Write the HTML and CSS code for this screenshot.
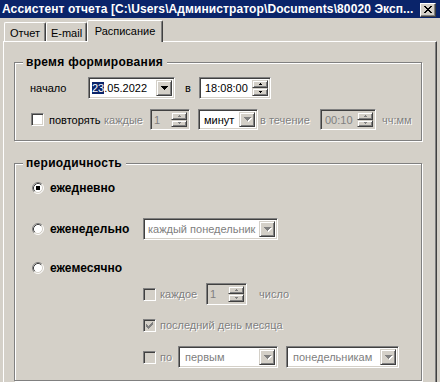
FILE: index.html
```html
<!DOCTYPE html>
<html lang="ru">
<head>
<meta charset="utf-8">
<title>Ассистент отчета</title>
<link rel="stylesheet" href="styles.css">
</head>
<body>
<div class="window">
  <div class="titlebar">
    <span class="title">Ассистент отчета [C:\Users\Администратор\Documents\80020 Эксп...</span>
    <span class="close">
      <svg width="8" height="7" viewBox="0 0 8 7" shape-rendering="crispEdges"><path d="M0 0h2v1h-2zM6 0h2v1h-2zM1 1h2v1h-2zM5 1h2v1h-2zM2 2h4v1h-4zM3 3h2v1h-2zM2 4h4v1h-4zM1 5h2v1h-2zM5 5h2v1h-2zM0 6h2v1h-2zM6 6h2v1h-2z"/></svg>
    </span>
  </div>

  <div class="tabs">
    <div class="tab t1">Отчет</div>
    <div class="tab t2">E-mail</div>
    <div class="tab t3 active">Расписание</div>
  </div>

  <div class="panel">
    <div class="group g1">
      <div class="legend">время формирования</div>

      <div class="row r1">
        <span class="lbl w-nachalo">начало</span>
        <div class="field combo w-date">
          <span class="val"><span class="sel">23</span>.05.2022</span>
          <span class="ddbtn"><svg class="arr" width="7" height="4" viewBox="0 0 7 4" shape-rendering="crispEdges"><path d="M0 0h7v1h-1v1h-1v1h-1v1h-1v-1h-1v-1h-1v-1h-1z"/></svg></span>
        </div>
        <span class="lbl w-v">в</span>
        <div class="field spin w-time">
          <span class="val">18:08:00</span>
          <span class="spinbtns">
            <span class="sb"><svg width="3" height="2" viewBox="0 0 3 2" shape-rendering="crispEdges"><path d="M1 0h1v1h1v1h-3v-1h1z"/></svg></span>
            <span class="sb"><svg width="3" height="2" viewBox="0 0 3 2" shape-rendering="crispEdges"><path d="M0 0h3v1h-1v1h-1v-1h-1z"/></svg></span>
          </span>
        </div>
      </div>

      <div class="row r2">
        <span class="check"></span>
        <span class="lbl w-povt">повторять</span>
        <span class="lbl dis w-kazhd">каждые</span>
        <div class="field spin disabled w-n1">
          <span class="val">1</span>
          <span class="spinbtns">
            <span class="sb dis"><svg width="3" height="2" viewBox="0 0 3 2" shape-rendering="crispEdges"><path d="M1 0h1v1h1v1h-3v-1h1z"/></svg></span>
            <span class="sb dis"><svg width="3" height="2" viewBox="0 0 3 2" shape-rendering="crispEdges"><path d="M0 0h3v1h-1v1h-1v-1h-1z"/></svg></span>
          </span>
        </div>
        <div class="field combo w-min">
          <span class="val">минут</span>
          <span class="ddbtn dis"><svg class="arr" width="8" height="5" viewBox="0 0 8 5" shape-rendering="crispEdges"><path fill="#fff" d="M1 1h7v1h-1v1h-1v1h-1v1h-1v-1h-1v-1h-1v-1h-1z"/><path fill="#808080" d="M0 0h7v1h-1v1h-1v1h-1v1h-1v-1h-1v-1h-1v-1h-1z"/></svg></span>
        </div>
        <span class="lbl dis w-vtech">в течение</span>
        <div class="field spin disabled w-t10">
          <span class="val">00:10</span>
          <span class="spinbtns">
            <span class="sb dis"><svg width="3" height="2" viewBox="0 0 3 2" shape-rendering="crispEdges"><path d="M1 0h1v1h1v1h-3v-1h1z"/></svg></span>
            <span class="sb dis"><svg width="3" height="2" viewBox="0 0 3 2" shape-rendering="crispEdges"><path d="M0 0h3v1h-1v1h-1v-1h-1z"/></svg></span>
          </span>
        </div>
        <span class="lbl dis w-hhmm">чч:мм</span>
      </div>
    </div>

    <div class="group g2">
      <div class="legend">периодичность</div>

      <div class="row p1">
        <span class="radio on"><svg width="12" height="12" viewBox="0 0 12 12"><circle cx="6" cy="6" r="5" fill="#fff"/><path d="M2.11 9.89A5.5 5.5 0 0 1 9.89 2.11" stroke="#808080" fill="none"/><path d="M9.89 2.11A5.5 5.5 0 0 1 2.11 9.89" stroke="#fff" fill="none"/><path d="M2.82 9.18A4.5 4.5 0 0 1 9.18 2.82" stroke="#404040" fill="none"/><path d="M9.18 2.82A4.5 4.5 0 0 1 2.82 9.18" stroke="#d4d0c8" fill="none"/><rect x="4" y="4" width="4" height="4" fill="#000"/></svg></span>
        <span class="lbl b">ежедневно</span>
      </div>

      <div class="row p2">
        <span class="radio"><svg width="12" height="12" viewBox="0 0 12 12"><circle cx="6" cy="6" r="5" fill="#fff"/><path d="M2.11 9.89A5.5 5.5 0 0 1 9.89 2.11" stroke="#808080" fill="none"/><path d="M9.89 2.11A5.5 5.5 0 0 1 2.11 9.89" stroke="#fff" fill="none"/><path d="M2.82 9.18A4.5 4.5 0 0 1 9.18 2.82" stroke="#404040" fill="none"/><path d="M9.18 2.82A4.5 4.5 0 0 1 2.82 9.18" stroke="#d4d0c8" fill="none"/></svg></span>
        <span class="lbl b w-ened">еженедельно</span>
        <div class="field combo w-kpon">
          <span class="val dtext">каждый понедельник</span>
          <span class="ddbtn dis"><svg class="arr" width="8" height="5" viewBox="0 0 8 5" shape-rendering="crispEdges"><path fill="#fff" d="M1 1h7v1h-1v1h-1v1h-1v1h-1v-1h-1v-1h-1v-1h-1z"/><path fill="#808080" d="M0 0h7v1h-1v1h-1v1h-1v1h-1v-1h-1v-1h-1v-1h-1z"/></svg></span>
        </div>
      </div>

      <div class="row p3">
        <span class="radio"><svg width="12" height="12" viewBox="0 0 12 12"><circle cx="6" cy="6" r="5" fill="#fff"/><path d="M2.11 9.89A5.5 5.5 0 0 1 9.89 2.11" stroke="#808080" fill="none"/><path d="M9.89 2.11A5.5 5.5 0 0 1 2.11 9.89" stroke="#fff" fill="none"/><path d="M2.82 9.18A4.5 4.5 0 0 1 9.18 2.82" stroke="#404040" fill="none"/><path d="M9.18 2.82A4.5 4.5 0 0 1 2.82 9.18" stroke="#d4d0c8" fill="none"/></svg></span>
        <span class="lbl b">ежемесячно</span>
      </div>

      <div class="row s1">
        <span class="check disabled"></span>
        <span class="lbl dis w-kazhdoe">каждое</span>
        <div class="field spin disabled w-n2">
          <span class="val">1</span>
          <span class="spinbtns">
            <span class="sb dis"><svg width="3" height="2" viewBox="0 0 3 2" shape-rendering="crispEdges"><path d="M1 0h1v1h1v1h-3v-1h1z"/></svg></span>
            <span class="sb dis"><svg width="3" height="2" viewBox="0 0 3 2" shape-rendering="crispEdges"><path d="M0 0h3v1h-1v1h-1v-1h-1z"/></svg></span>
          </span>
        </div>
        <span class="lbl dis w-chislo">число</span>
      </div>

      <div class="row s2">
        <span class="check disabled"><svg width="7" height="7" viewBox="0 0 7 7" shape-rendering="crispEdges"><path fill="#808080" d="M6 0h1v1h-1zM5 1h2v1h-2zM0 2h1v1h-1zM4 2h3v1h-3zM0 3h2v1h-2zM3 3h3v1h-3zM0 4h5v1h-5zM1 5h3v1h-3zM2 6h1v1h-1z"/></svg></span>
        <span class="lbl dis">последний день месяца</span>
      </div>

      <div class="row s3">
        <span class="check disabled"></span>
        <span class="lbl dis w-po">по</span>
        <div class="field combo w-perv">
          <span class="val dtext">первым</span>
          <span class="ddbtn dis"><svg class="arr" width="8" height="5" viewBox="0 0 8 5" shape-rendering="crispEdges"><path fill="#fff" d="M1 1h7v1h-1v1h-1v1h-1v1h-1v-1h-1v-1h-1v-1h-1z"/><path fill="#808080" d="M0 0h7v1h-1v1h-1v1h-1v1h-1v-1h-1v-1h-1v-1h-1z"/></svg></span>
        </div>
        <div class="field combo w-ponm">
          <span class="val dtext">понедельникам</span>
          <span class="ddbtn dis"><svg class="arr" width="8" height="5" viewBox="0 0 8 5" shape-rendering="crispEdges"><path fill="#fff" d="M1 1h7v1h-1v1h-1v1h-1v1h-1v-1h-1v-1h-1v-1h-1z"/><path fill="#808080" d="M0 0h7v1h-1v1h-1v1h-1v1h-1v-1h-1v-1h-1v-1h-1z"/></svg></span>
        </div>
      </div>
    </div>
  </div>
</div>
</body>
</html>
```

FILE: styles.css
```css
* { box-sizing: border-box; }

html, body {
  margin: 0;
  padding: 0;
  background: #d4d0c8;
}

body {
  font-family: "Liberation Sans", Arial, sans-serif;
  font-size: 11px;
  color: #000;
}

.window {
  width: 440px;
  height: 382px;
  overflow: hidden;
  background: #d4d0c8;
}

/* title bar */
.titlebar {
  height: 18px;
  background: #0a246a;
  display: flex;
  align-items: center;
  padding-left: 2px;
}

.title {
  flex: 1;
  color: #fff;
  font-weight: bold;
  font-size: 12px;
  letter-spacing: 0.1px;
  white-space: nowrap;
  overflow: hidden;
}

.close {
  width: 16px;
  height: 14px;
  margin-right: 4px;
  margin-top: 1px;
  background: #d4d0c8;
  border: 1px solid;
  border-color: #fff #404040 #404040 #fff;
  box-shadow: inset -1px -1px 0 #808080;
  display: flex;
  align-items: center;
  justify-content: center;
}

/* tabs */
.tabs {
  height: 23px;
  display: flex;
  align-items: flex-end;
  padding-left: 4px;
}

.tab {
  height: 19px;
  border: 1px solid;
  border-bottom: none;
  border-color: #fff #404040 transparent #fff;
  box-shadow: inset -1px 0 0 #808080;
  border-radius: 2px 2px 0 0;
  display: flex;
  align-items: center;
  justify-content: center;
  padding-top: 1px;
}

.t1 { width: 42px; }
.t2 { width: 41px; }

.tab.active {
  width: 76px;
  height: 22px;
  margin-bottom: -1px;
  position: relative;
  z-index: 1;
  background: #d4d0c8;
  padding-top: 0;
  padding-bottom: 2px;
}

/* panel */
.panel {
  margin-left: 3px;
  width: 434px;
  height: 342px;
  border-top: 1px solid #fff;
  border-left: 1px solid #fff;
  border-right: 1px solid #404040;
  box-shadow: inset -1px 0 0 #808080;
  padding: 20px 0 0 10px;
}

.group {
  position: relative;
  width: 408px;
  border: 1px solid #808080;
  box-shadow: inset 1px 1px 0 #fff, 1px 1px 0 #fff;
}

.g1 { height: 79px; }
.g2 { height: 218px; margin-top: 22px; }

.legend {
  position: absolute;
  top: -8px;
  left: 8px;
  padding: 0 4px 0 3px;
  line-height: 14px;
  background: #d4d0c8;
  font-size: 12px;
  font-weight: bold;
  letter-spacing: 0.3px;
}

/* rows */
.row {
  display: flex;
  align-items: center;
  height: 22px;
}

.r1 { margin-top: 14px; padding-left: 15px; }
.r2 { margin-top: 10px; padding-left: 16px; height: 21px; }

.p1 { margin-top: 13px; padding-left: 17px; }
.p2 { margin-top: 19px; padding-left: 17px; }
.p3 { margin-top: 17px; padding-left: 17px; }
.s1 { margin-top: 4px; padding-left: 128px; }
.s2 { margin-top: 9px; padding-left: 128px; }
.s3 { margin-top: 10px; padding-left: 128px; }

.lbl { white-space: nowrap; flex: none; }
.lbl.b {
  font-size: 12px;
  font-weight: bold;
  margin-left: 6px;
}
.lbl.dis { color: #808080; text-shadow: 1px 1px 0 #fff; }

.w-nachalo { width: 58px; }
.w-v { width: 24px; padding-left: 10px; }
.w-povt { width: 55px; margin-left: 5px; }
.w-kazhd { width: 46px; }
.w-vtech { width: 62px; padding-left: 2px; }
.w-hhmm { margin-left: 6px; }
.w-ened { width: 93px; }
.w-kazhdoe { width: 46px; margin-left: 4px; }
.w-chislo { margin-left: 12px; }
.w-po { width: 18px; margin-left: 4px; }
.s2 .lbl.dis { margin-left: 4px; }

/* sunken fields */
.field {
  flex: none;
  height: 100%;
  display: flex;
  align-items: stretch;
  background: #fff;
  border: 1px solid;
  border-color: #808080 #fff #fff #808080;
  box-shadow: inset 1px 1px 0 #404040, inset -1px -1px 0 #d4d0c8;
  padding: 2px;
}

.field.disabled { background: #d4d0c8; }

.val {
  flex: 1;
  display: flex;
  align-items: center;
  padding-left: 1px;
  white-space: nowrap;
  overflow: hidden;
}

.field.disabled .val,
.val.dtext { color: #808080; }

.sel { background: #0a246a; color: #fff; }

.w-date { width: 87px; }
.w-time { width: 72px; }
.w-time .val { padding-left: 3px; }
.w-n1 { width: 40px; }
.w-min { width: 60px; margin-left: 8px; }
.w-min .val { padding-left: 3px; }
.w-t10 { width: 56px; }
.w-t10 .val { padding-left: 2px; }
.w-kpon { width: 135px; }
.w-kpon .val { padding-left: 2px; }
.w-n2 { width: 41px; }
.w-perv { width: 100px; }
.w-perv .val { padding-left: 4px; }
.w-ponm { width: 113px; margin-left: 8px; }
.w-ponm .val { padding-left: 4px; }

/* dropdown button */
.ddbtn {
  flex: none;
  width: 16px;
  background: #d4d0c8;
  border: 1px solid;
  border-color: #d4d0c8 #404040 #404040 #d4d0c8;
  box-shadow: inset 1px 1px 0 #fff, inset -1px -1px 0 #808080;
  display: flex;
  align-items: center;
  justify-content: center;
}

.ddbtn .arr { margin-left: 1px; }

/* spin buttons */
.spinbtns {
  flex: none;
  width: 16px;
  display: flex;
  flex-direction: column;
}

.sb {
  flex: 1;
  background: #d4d0c8;
  border: 1px solid;
  border-color: #d4d0c8 #404040 #404040 #d4d0c8;
  box-shadow: inset 1px 1px 0 #fff, inset -1px -1px 0 #808080;
  display: flex;
  align-items: center;
  justify-content: center;
}

.sb.dis svg { fill: #808080; }

/* checkbox */
.check {
  flex: none;
  width: 13px;
  height: 13px;
  background: #fff;
  border: 1px solid;
  border-color: #808080 #fff #fff #808080;
  box-shadow: inset 1px 1px 0 #404040, inset -1px -1px 0 #d4d0c8;
  display: flex;
  align-items: center;
  justify-content: center;
}

.check.disabled { background: #d4d0c8; }

/* radio */
.radio {
  flex: none;
  width: 12px;
  height: 12px;
  display: flex;
}
```
